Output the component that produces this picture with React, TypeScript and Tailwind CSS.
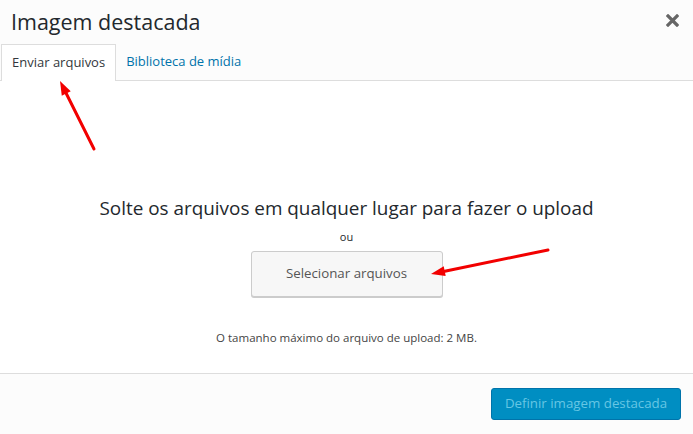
import React from 'react';

const FONT = '"Open Sans", "Noto Sans", Arial, sans-serif';

function Arrow({ x1, y1, x2, y2 }: { x1: number; y1: number; x2: number; y2: number }) {
  // arrow pointing from (x1,y1) toward the tip (x2,y2)
  const ang = Math.atan2(y2 - y1, x2 - x1);
  const len = 14;
  const half = 5;
  const bx = x2 - Math.cos(ang) * len;
  const by = y2 - Math.sin(ang) * len;
  const px = -Math.sin(ang) * half;
  const py = Math.cos(ang) * half;
  return (
    <g>
      <line x1={x1} y1={y1} x2={bx} y2={by} stroke="#f20000" strokeWidth={3} strokeLinecap="round" />
      <polygon points={`${x2},${y2} ${bx + px},${by + py} ${bx - px},${by - py}`} fill="#f20000" />
    </g>
  );
}

export default function App() {
  return (
    <div className="relative w-[693px] h-[434px] bg-white flex flex-col overflow-hidden" style={{ fontFamily: FONT }}>
      {/* Header */}
      <div className="bg-[#fcfcfc] border-b border-[#dddddd] h-[81px] flex flex-col">
        <div className="flex items-center justify-between h-[45px] pl-[11px] pr-[14px]">
          <h1 className="text-[21.5px] text-[#23282d] leading-none -mt-[1px]">Imagem destacada</h1>
          <svg width="13" height="13" viewBox="0 0 13 13" className="-mt-[4px]">
            <path d="M2 2 L11 11 M11 2 L2 11" stroke="#666666" strokeWidth="3.2" strokeLinecap="square" />
          </svg>
        </div>
        <div className="flex items-end h-[36px] text-[13px]">
          <div className="ml-[1px] px-[10px] flex items-center bg-white border border-b-0 border-[#dddddd] text-[#32373c] -mb-[1px] h-[37px]">
            Enviar arquivos
          </div>
          <div className="h-[36px] px-[10px] flex items-center text-[#0073aa]">Biblioteca de mídia</div>
        </div>
      </div>

      {/* Body */}
      <div className="flex-1 flex flex-col items-center bg-white">
        <p className="mt-[118px] text-[18.9px] text-[#23282d] leading-none">
          Solte os arquivos em qualquer lugar para fazer o upload
        </p>
        <p className="mt-[13px] text-[11px] text-[#23282d] leading-none">ou</p>
        <button className="mt-[9px] w-[192px] h-[46px] bg-[#f7f7f7] border border-[#cccccc] rounded-[3px] shadow-[0_1px_0_#cccccc] text-[13.3px] text-[#555555]">
          Selecionar arquivos
        </button>
        <p className="mt-[35px] text-[11.5px] text-[#444444] leading-none">
          O tamanho máximo do arquivo de upload: 2 MB.
        </p>
      </div>

      {/* Footer */}
      <div className="h-[61px] bg-[#fcfcfc] border-t border-[#dddddd] flex items-center justify-end pr-[12px]">
        <button className="w-[190px] h-[32px] bg-[#008ec2] rounded-[3px] border border-[#0073aa] text-[13.3px] text-[#66c6e4]">
          Definir imagem destacada
        </button>
      </div>

      <svg className="absolute inset-0 pointer-events-none" width={693} height={434}>
        <Arrow x1={94} y1={149} x2={60} y2={81} />
        <Arrow x1={548} y1={250} x2={431} y2={274} />
      </svg>
    </div>
  );
}
